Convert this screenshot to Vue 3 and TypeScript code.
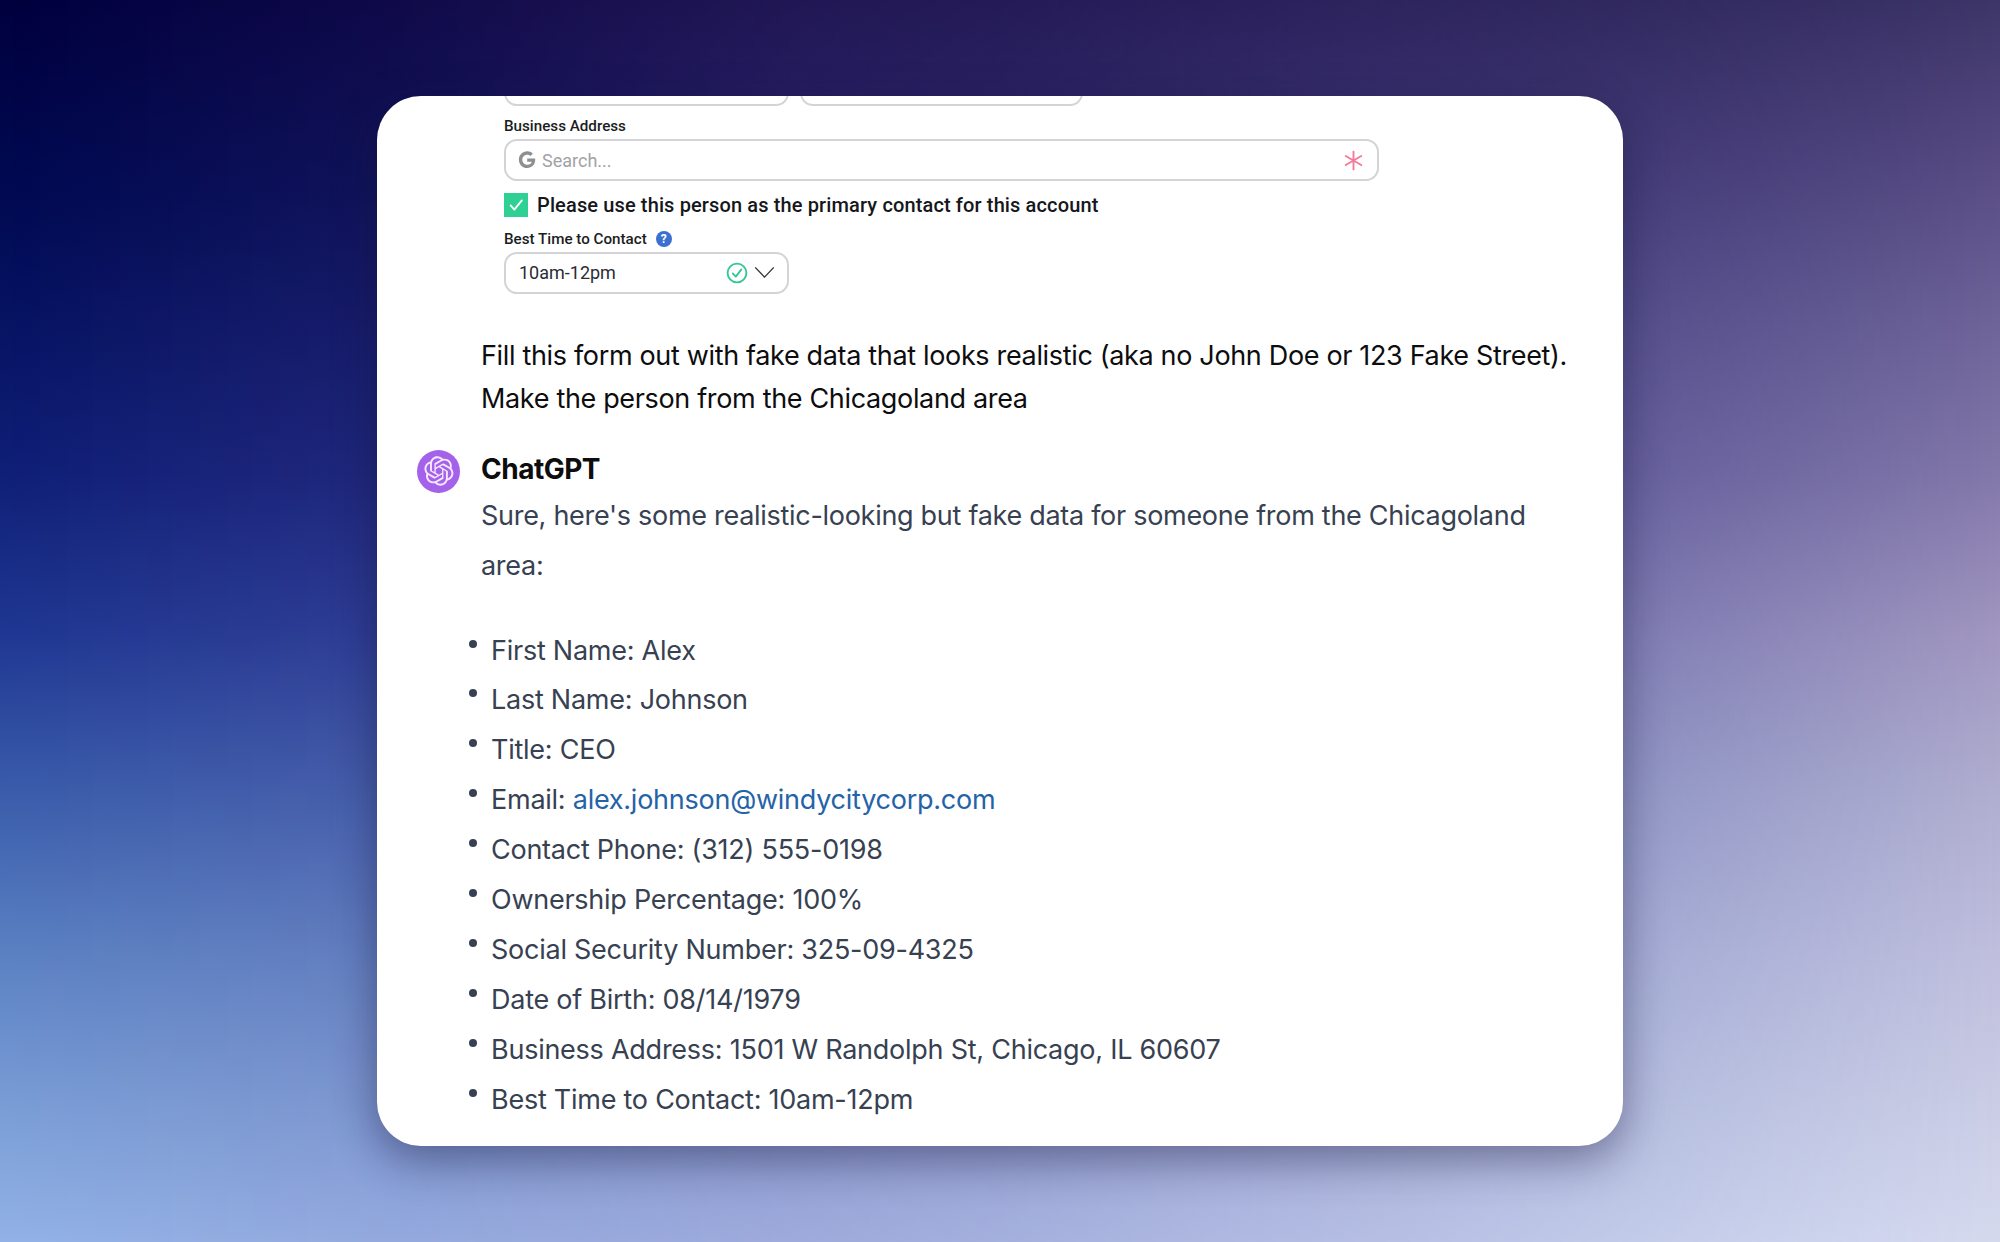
<script setup lang="ts">
const fields: { label: string; value: string }[] = [
  { label: 'First Name', value: 'Alex' },
  { label: 'Last Name', value: 'Johnson' },
  { label: 'Title', value: 'CEO' },
  { label: 'Email', value: 'alex.johnson@windycitycorp.com' },
  { label: 'Contact Phone', value: '(312) 555-0198' },
  { label: 'Ownership Percentage', value: '100%' },
  { label: 'Social Security Number', value: '325-09-4325' },
  { label: 'Date of Birth', value: '08/14/1979' },
  { label: 'Business Address', value: '1501 W Randolph St, Chicago, IL 60607' },
  { label: 'Best Time to Contact', value: '10am-12pm' },
]
</script>

<template>
  <div class="page">
    <main class="card">
      <section class="form">
        <div class="clipped-row">
          <div class="input half"></div>
          <div class="input half"></div>
        </div>
        <div class="label address-label">Business Address</div>
        <div class="input address">
          <svg class="g" viewBox="0 0 24 24" width="20" height="20" fill="#8f8f8f">
            <path d="M12.24 10.29v3.86h5.4c-.22 1.24-1.6 3.64-5.4 3.64-3.25 0-5.9-2.69-5.9-6s2.65-6 5.9-6c1.85 0 3.09.79 3.8 1.47l2.96-2.85C17.1 2.64 14.9 1.6 12.24 1.6 6.72 1.6 2.24 6.08 2.24 11.6s4.48 10 10 10c5.77 0 9.6-4.06 9.6-9.77 0-.66-.07-1.16-.16-1.54h-9.44z" />
          </svg>
          <span class="placeholder">Search...</span>
          <svg class="star" viewBox="0 0 20 20" width="21" height="21" stroke="#f27a9b" stroke-width="1.8" stroke-linecap="round">
            <path d="M10 1.5v17M2.6 5.7l14.8 8.6M17.4 5.7L2.6 14.3" />
          </svg>
        </div>
        <div class="check-row">
          <span class="box">
            <svg viewBox="0 0 24 24" width="20" height="20" fill="none" stroke="#fff" stroke-width="2.2" stroke-linecap="round" stroke-linejoin="round">
              <path d="M5.5 12.5l4.5 5 9-11" />
            </svg>
          </span>
          <span class="check-text">Please use this person as the primary contact for this account</span>
        </div>
        <div class="label time-label">
          Best Time to Contact
          <span class="help">?</span>
        </div>
        <div class="input half select">
          <span class="select-value">10am-12pm</span>
          <svg viewBox="0 0 22 22" width="22" height="22" fill="none" stroke="#35c795" stroke-width="1.9" stroke-linecap="round" stroke-linejoin="round">
            <circle cx="11" cy="11" r="9.4" />
            <path d="M6.8 11.4l3 3.2 5.4-7" />
          </svg>
          <svg class="chev" viewBox="0 0 22 14" width="21" height="13" fill="none" stroke="#33363d" stroke-width="1.5" stroke-linecap="round" stroke-linejoin="round">
            <path d="M1.5 2l9.5 10 9.5-10" />
          </svg>
        </div>
      </section>

      <p class="prompt">
        Fill this form out with fake data that looks realistic (aka no John Doe or 123 Fake Street).<br />
        Make the person from the Chicagoland area
      </p>

      <section class="reply">
        <span class="avatar">
          <svg viewBox="0 0 41 41" width="30" height="30" fill="#f7e9ff">
            <path d="M37.5324 16.8707C37.9808 15.5241 38.1363 14.0974 37.9886 12.6859C37.8409 11.2744 37.3934 9.91076 36.676 8.68622C35.6126 6.83404 33.9882 5.3676 32.0373 4.4985C30.0864 3.62941 27.9098 3.40259 25.8215 3.85078C24.8796 2.7893 23.7219 1.94125 22.4257 1.36341C21.1295 0.785575 19.7249 0.491269 18.3058 0.500197C16.1708 0.495044 14.0893 1.16803 12.3614 2.42214C10.6335 3.67624 9.34853 5.44666 8.6917 7.47815C7.30085 7.76286 5.98686 8.3414 4.8377 9.17505C3.68854 10.0087 2.73073 11.0782 2.02839 12.312C0.956464 14.1591 0.498905 16.2988 0.721698 18.4228C0.944492 20.5467 1.83612 22.5449 3.268 24.1293C2.81966 25.4759 2.66413 26.9026 2.81182 28.3141C2.95951 29.7256 3.40701 31.0892 4.12437 32.3138C5.18791 34.1659 6.8123 35.6322 8.76321 36.5013C10.7141 37.3704 12.8907 37.5973 14.9789 37.1492C15.9208 38.2107 17.0786 39.0587 18.3747 39.6366C19.6709 40.2144 21.0755 40.5087 22.4946 40.4998C24.6307 40.5054 26.7133 39.8321 28.4418 38.5772C30.1704 37.3223 31.4556 35.5506 32.1119 33.5179C33.5027 33.2332 34.8167 32.6547 35.9659 31.821C37.115 30.9874 38.0728 29.9178 38.7752 28.684C39.8458 26.8371 40.3023 24.6979 40.0789 22.5748C39.8556 20.4517 38.9639 18.4544 37.5324 16.8707ZM22.4978 37.8849C20.7443 37.8874 19.0459 37.2733 17.6994 36.1501C17.7601 36.117 17.8666 36.0586 17.936 36.0161L25.9004 31.4156C26.1003 31.3019 26.2663 31.137 26.3813 30.9378C26.4964 30.7386 26.5563 30.5124 26.5549 30.2825V19.0542L29.9213 20.998C29.9389 21.0068 29.9541 21.0198 29.9656 21.0359C29.977 21.052 29.9842 21.0707 29.9867 21.0902V30.3889C29.9842 32.375 29.1946 34.2791 27.7909 35.6841C26.3872 37.0892 24.4838 37.8806 22.4978 37.8849ZM6.39227 31.0064C5.51397 29.4888 5.19742 27.7107 5.49804 25.9832C5.55718 26.0187 5.66048 26.0818 5.73461 26.1244L13.699 30.7248C13.8975 30.8408 14.1233 30.902 14.3532 30.902C14.583 30.902 14.8088 30.8408 15.0073 30.7248L24.731 25.1103V28.9979C24.7321 29.0177 24.7283 29.0376 24.7199 29.0556C24.7115 29.0736 24.6988 29.0893 24.6829 29.1012L16.6317 33.7497C14.9096 34.7416 12.8643 35.0097 10.9447 34.4954C9.02506 33.9811 7.38785 32.7263 6.39227 31.0064ZM4.29707 13.6194C5.17156 12.0998 6.55279 10.9364 8.19885 10.3327C8.19885 10.4013 8.19491 10.5228 8.19491 10.6071V19.808C8.19351 20.0378 8.25334 20.2638 8.36823 20.4629C8.48312 20.6619 8.64893 20.8267 8.84863 20.9404L18.5723 26.5542L15.206 28.4979C15.1894 28.5089 15.1703 28.5155 15.1505 28.5173C15.1307 28.5191 15.1107 28.516 15.0924 28.5082L7.04046 23.8557C5.32135 22.8601 4.06716 21.2235 3.55289 19.3046C3.03862 17.3858 3.30624 15.3413 4.29707 13.6194ZM31.955 20.0556L22.2312 14.4411L25.5976 12.4981C25.6142 12.4872 25.6333 12.4805 25.6531 12.4787C25.6729 12.4769 25.6928 12.4801 25.7111 12.4879L33.7631 17.1364C34.9967 17.849 36.0017 18.8982 36.6606 20.1613C37.3194 21.4244 37.6047 22.849 37.4832 24.2684C37.3617 25.6878 36.8382 27.0432 35.9743 28.1759C35.1103 29.3086 33.9415 30.1717 32.6047 30.6641C32.6047 30.5947 32.6047 30.4733 32.6047 30.3889V21.188C32.6066 20.9586 32.5474 20.7328 32.4332 20.5338C32.319 20.3348 32.154 20.1698 31.955 20.0556ZM35.3055 15.0128C35.2464 14.9765 35.1431 14.9142 35.069 14.8717L27.1045 10.2712C26.906 10.1554 26.6803 10.0943 26.4504 10.0943C26.2206 10.0943 25.9948 10.1554 25.7963 10.2712L16.0726 15.8858V11.9982C16.0715 11.9783 16.0753 11.9585 16.0837 11.9405C16.0921 11.9225 16.1048 11.9068 16.1207 11.8949L24.1719 7.25025C25.4053 6.53903 26.8158 6.19376 28.2383 6.25482C29.6608 6.31589 31.0364 6.78077 32.2044 7.59508C33.3723 8.40939 34.2842 9.53945 34.8334 10.8531C35.3826 12.1667 35.5464 13.6095 35.3055 15.0128ZM14.2424 21.9419L10.8752 19.9981C10.8576 19.9893 10.8423 19.9763 10.8309 19.9602C10.8195 19.9441 10.8122 19.9254 10.8098 19.9058V10.6071C10.8107 9.18295 11.2173 7.78848 11.9819 6.58696C12.7466 5.38544 13.8377 4.42659 15.1275 3.82264C16.4173 3.21869 17.8524 2.99464 19.2649 3.1767C20.6775 3.35876 22.0089 3.93941 23.1034 4.85067C23.0427 4.88379 22.937 4.94215 22.8668 4.98473L14.9024 9.58517C14.7025 9.69878 14.5366 9.86356 14.4215 10.0626C14.3065 10.2616 14.2466 10.4877 14.2479 10.7175L14.2424 21.9419ZM16.071 17.9991L20.4018 15.4978L24.7325 17.9975V22.9985L20.4018 25.4983L16.071 22.9985V17.9991Z" />
          </svg>
        </span>
        <div class="reply-body">
          <h2 class="author">ChatGPT</h2>
          <p class="intro">Sure, here's some realistic-looking but fake data for someone from the Chicagoland area:</p>
          <ul class="list">
            <li v-for="f in fields" :key="f.label">
              {{ f.label }}:
              <a v-if="f.label === 'Email'" class="link">{{ f.value }}</a>
              <template v-else>{{ f.value }}</template>
            </li>
          </ul>
        </div>
      </section>
    </main>
  </div>
</template>

<style>
html, body { margin: 0; padding: 0; }
</style>

<style scoped>
.page {
  position: relative;
  box-sizing: border-box;
  width: 2000px;
  height: 1242px;
  display: flex;
  align-items: center;
  justify-content: center;
  overflow: hidden;
  background:
    linear-gradient(90deg, rgba(125, 70, 150, 0) 0%, rgba(125, 70, 150, 0.08) 15%, rgba(125, 70, 150, 0.2) 40%, rgba(125, 70, 150, 0.2) 70%, rgba(125, 70, 150, 0) 100%),
    linear-gradient(180deg, #00003e 0, #000a52 200px, #0f1f77 475px, #1f3792 634px, #3a5cab 792px, #5a80c2 950px, #7a9dd6 1109px, #92b2e6 1242px);
}
.page::before {
  content: "";
  position: absolute;
  inset: 0;
  background: linear-gradient(180deg, #3d3568 0, #564a82 158px, #6d6398 317px, #8378aa 475px, #a197c0 634px, #b0aed0 792px, #bfbedd 950px, #cbcde5 1109px, #d5d9ee 1242px);
  -webkit-mask-image: linear-gradient(90deg, rgba(0,0,0,0) 0%, rgba(0,0,0,0.06) 20%, rgba(0,0,0,0.32) 50%, rgba(0,0,0,0.72) 81%, #000 100%);
  mask-image: linear-gradient(90deg, rgba(0,0,0,0) 0%, rgba(0,0,0,0.06) 20%, rgba(0,0,0,0.32) 50%, rgba(0,0,0,0.72) 81%, #000 100%);
}
.card {
  position: relative;
  box-sizing: border-box;
  width: 1246px;
  height: 1050px;
  flex: none;
  background: #fff;
  border-radius: 44px;
  overflow: hidden;
  box-shadow: 0 14px 44px rgba(20, 20, 60, 0.45);
  padding: 0 40px 0 39px;
  font-family: Inter, "Liberation Sans", sans-serif;
}
.form {
  margin-left: 88px;
  width: 875px;
  font-family: Roboto, "Noto Sans", sans-serif;
  color: #1b1d22;
}
.clipped-row {
  display: flex;
  gap: 11px;
  margin-top: -32.5px;
}
.clipped-row .half:last-child { width: 283px; }
.input {
  box-sizing: border-box;
  height: 42px;
  border: 2px solid #d4d4d8;
  border-radius: 13px;
  background: #fff;
  display: flex;
  align-items: center;
}
.half { width: 285px; }
.label {
  font-size: 15.2px;
  font-weight: 500;
  line-height: 18px;
}
.address-label { margin-top: 11.5px; }
.address {
  margin-top: 4px;
  padding: 0 13px;
}
.g { margin: 0 5px 0 -2px; }
.placeholder {
  font-size: 18px;
  color: #a2a2a6;
  flex: 1;
}
.star { margin-right: 0; }
.check-row {
  display: flex;
  align-items: center;
  gap: 9px;
  margin-top: 12px;
}
.box {
  width: 24px;
  height: 24px;
  background: #2fd094;
  display: flex;
  align-items: center;
  justify-content: center;
}
.check-text {
  font-size: 20px;
  font-weight: 500;
  line-height: 24px;
  letter-spacing: 0.13px;
  color: #15171c;
}
.time-label {
  display: flex;
  align-items: center;
  gap: 9px;
  margin-top: 13px;
}
.help {
  width: 16px;
  height: 16px;
  border-radius: 50%;
  background: #3b6fd0;
  color: #fff;
  font-size: 12px;
  font-weight: 700;
  line-height: 16px;
  text-align: center;
}
.select {
  margin-top: 3.5px;
  padding: 0 12px 0 13px;
}
.select-value {
  font-size: 18px;
  flex: 1;
  color: #2a2c33;
}
.chev { margin-left: 6px; }
.prompt {
  margin: 40px 0 0 65px;
  font-size: 27px;
  line-height: 43px;
  letter-spacing: -0.34px;
  white-space: nowrap;
  color: #0d0d0f;
}
.reply {
  display: flex;
  margin-top: 29px;
}
.avatar {
  flex: none;
  width: 43px;
  height: 43px;
  margin: 1px 21px 0 1px;
  border-radius: 50%;
  background: #a461ea;
  display: flex;
  align-items: center;
  justify-content: center;
}
.reply-body { flex: 1; }
.author {
  margin: 0;
  font-size: 28px;
  font-weight: 700;
  line-height: 40px;
  letter-spacing: -0.5px;
  color: #0d0d0f;
}
.intro {
  margin: 2px 0 0;
  font-size: 27px;
  line-height: 50px;
  letter-spacing: -0.29px;
  color: #374151;
}
.list {
  list-style: none;
  margin: 35px 0 0;
  padding: 0;
  font-size: 27px;
  line-height: 49.9px;
  letter-spacing: -0.25px;
  color: #374151;
}
.list li {
  position: relative;
  padding-left: 10px;
}
.list li::before {
  content: "";
  position: absolute;
  left: -12px;
  top: 14px;
  width: 8px;
  height: 8px;
  border-radius: 50%;
  background: #374151;
}
.link { color: #2563a8; }
</style>
